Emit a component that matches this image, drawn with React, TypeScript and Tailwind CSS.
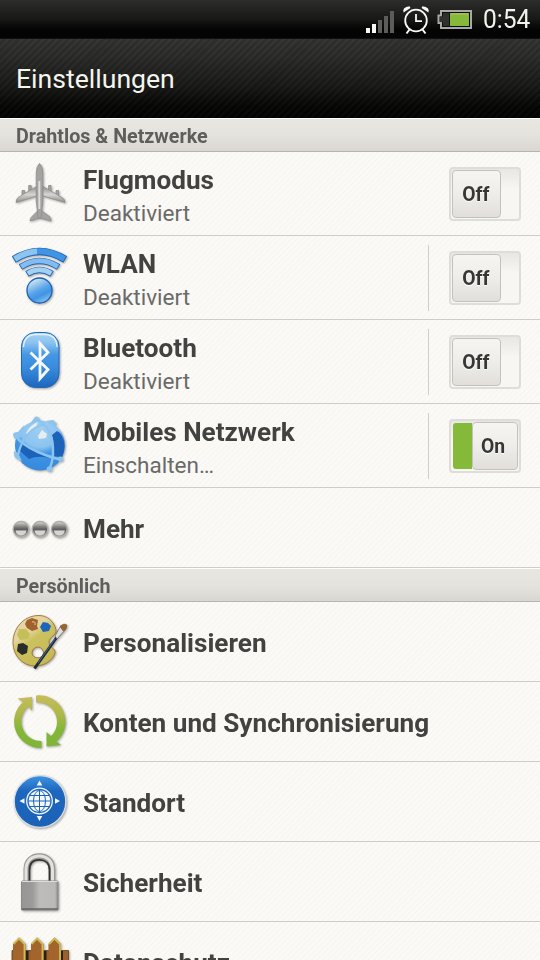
import type { ReactNode } from "react";
import clsx from "clsx";

// =========================================
// ICONS
// =========================================
const Icon = ({ children }: { children: ReactNode }) => (
    <svg
        viewBox="0 0 61 61"
        className="w-[61px] h-[61px] shrink-0 drop-shadow-[1px_1px_1px_rgba(0,0,0,0.35)]"
    >
        {children}
    </svg>
);

const PlaneIcon = () => (
    <Icon>
        <g fill="#a3a3a1" stroke="#8a8a88" strokeWidth="0.7">
            <path d="M12 27.500h2.500v6H12zM18.700 22.500h2.500v6h-2.500zM38.500 22.500H41v6h-2.500zM46 27.500h2.500v6H46z" />
            <path
                fill="url(#planeWing)"
                d="M26.500 23.500 8 34.500q-2 1.500-2 5l20.500-6.500zM33 23.500 52 34.500q3 1.500 3 5L33 33z"
            />
            <path d="M27.500 48 21.500 54q-1.500 1.500-1.500 4l9.500-3 11.500 3q0-3-1.500-4.500L32 48z" />
            <path d="M29.500 0.500q3.300 3 3.300 10V38l-1.800 17h-2.800L26.200 38V10.500q0-7 3.300-10z" />
        </g>
        <path d="M29.300 18v28" stroke="#dcdcda" strokeWidth="2" />
        <defs>
            <linearGradient id="planeWing" x1="0" y1="0" x2="0" y2="1">
                <stop offset="0" stopColor="#8f8f8d" />
                <stop offset="0.5" stopColor="#d4d4d2" />
                <stop offset="1" stopColor="#8c8c8a" />
            </linearGradient>
        </defs>
    </Icon>
);

const WlanIcon = () => (
    <Icon>
        <g fill="none" stroke="#1c62b8" strokeLinejoin="round">
            <path d="M3.800 12.500Q29.500-3.500 55.200 12.500" strokeWidth="7.500" />
            <path d="M10.500 20Q29.500 8 48.500 20" strokeWidth="6.500" />
            <path d="M17 27Q29.500 19 42 27" strokeWidth="6.500" />
        </g>
        <g fill="none">
            <path d="M4.600 12Q29.500-3.500 54.400 12" stroke="url(#wlanArc)" strokeWidth="5.800" />
            <path d="M11.200 19.600Q29.500 8 47.800 19.600" stroke="#83bdf0" strokeWidth="4.800" />
            <path d="M17.700 26.600Q29.500 19 41.300 26.600" stroke="#a4d0f2" strokeWidth="4.800" />
        </g>
        <circle cx="29.500" cy="43.500" r="12.500" fill="url(#wlanDot)" stroke="#1c62b8" strokeWidth="1.300" />
        <defs>
            <linearGradient id="wlanArc">
                <stop offset="0" stopColor="#8cc4f2" />
                <stop offset="0.45" stopColor="#8cc4f2" />
                <stop offset="0.46" stopColor="#3f94e4" />
                <stop offset="1" stopColor="#3f94e4" />
            </linearGradient>
            <linearGradient id="wlanDot" x1="0.2" y1="0" x2="0.7" y2="1">
                <stop offset="0" stopColor="#e8f0f4" />
                <stop offset="0.5" stopColor="#58a5e8" />
                <stop offset="0.7" stopColor="#3f94e4" />
                <stop offset="1" stopColor="#8cc4f2" />
            </linearGradient>
        </defs>
    </Icon>
);

const BluetoothIcon = () => (
    <Icon>
        <rect x="11.500" y="1.500" width="37.500" height="55" rx="14" fill="url(#btBody)" stroke="#2267b8" />
        <path d="M13.500 16Q14 3.500 26 3.500h8.500Q46.500 3.500 47 16" fill="none" stroke="#e2f1fb" strokeWidth="1.300" />
        <path d="M20.500 21.500 38 38.500 30 47.500V12.500L38 21.500 20.500 38.500" fill="none" stroke="#f6f8f8" strokeWidth="2.800" />
        <defs>
            <linearGradient id="btBody" x1="0" y1="0" x2="0" y2="1">
                <stop offset="0" stopColor="#a6d3f4" />
                <stop offset="0.18" stopColor="#8cc4f0" />
                <stop offset="0.4" stopColor="#4598e5" />
                <stop offset="0.65" stopColor="#388bdc" />
                <stop offset="1" stopColor="#1c66bd" />
            </linearGradient>
        </defs>
    </Icon>
);

const NetworkIcon = () => (
    <Icon>
        <circle cx="30" cy="30.500" r="25" fill="url(#netGlobe)" />
        <path d="M42 20Q45 28 42 41l10 1q5-11 0-21-2-4-5-5z" fill="#1b62b8" />
        <path d="M11 26Q24 35 40 43 27 40 19 44L10 36z" fill="#1b62b8" />
        <path d="M28 21 32 15l5 4-1 4-7 1zM16 18q5-9 12-11l-2 5-8 8z" fill="#eff1ee" opacity="0.9" />
        <g fill="none" stroke="#8dc4ef">
            <path d="M5 20.500Q12 30 28 37T51 44" strokeWidth="2.600" />
            <path d="M26 4Q39 10 42 25T40 53" strokeWidth="2.400" />
            <path d="M35 9Q14 14 8 40" strokeWidth="2.200" />
        </g>
        <g fill="#8dc4ef">
            <path d="M25 2q3-2 5 3l-11 5zM3 20q0-3 5-3l6-7-3 12-6 2zM4 36l4 2 4 8-5-2q-4-3-3-8z" />
            <circle cx="50.500" cy="44" r="2.600" />
            <circle cx="39.500" cy="54" r="2.800" />
            <path d="M36 6l7-1 4 4-3 2z" />
        </g>
        <defs>
            <radialGradient id="netGlobe" cx="0.5" cy="0.15" r="0.85">
                <stop offset="0" stopColor="#9fcff3" />
                <stop offset="0.45" stopColor="#8cc4f0" />
                <stop offset="0.62" stopColor="#3f94e4" />
                <stop offset="1" stopColor="#3689dc" />
            </radialGradient>
        </defs>
    </Icon>
);

const MoreIcon = () => (
    <Icon>
        {[11, 30, 49.300].map((cx) => (
            <g key={cx}>
                <circle cx={cx} cy="32.300" r="7.800" fill="url(#moreBall)" stroke="#b0afac" strokeWidth="1.300" />
                <path d={`M${cx - 5.500} 33.500h11q-1 5-5.500 5t-5.500-5z`} fill="#d6d5d3" />
            </g>
        ))}
        <defs>
            <linearGradient id="moreBall" x1="0" y1="0" x2="0" y2="1">
                <stop offset="0" stopColor="#dddcda" />
                <stop offset="0.3" stopColor="#8b8b89" />
                <stop offset="0.5" stopColor="#5e5e5c" />
                <stop offset="1" stopColor="#9c9b99" />
            </linearGradient>
        </defs>
    </Icon>
);

const PaletteIcon = () => (
    <Icon>
        <path
            d="M29 4.500C13 4.500 3 18 3 31.500S13 55 25 55c10 0 18-6 20-13 1-5-6-5-6-11 0-5 8-7 7-12C44 10 37 4.500 29 4.500zM28 36a6 6 0 0 1 5.500 6.500 6 6 0 0 1-11.500 0A6 6 0 0 1 28 36z"
            fill="url(#paletteWood)"
            stroke="#a07038"
            strokeWidth="0.900"
            fillRule="evenodd"
        />
        <path d="m17 9 5-2 6 2-1 6 1 3-6 2-5-3-2-4z" fill="#a0612c" />
        <path d="M22 11q4-1 3 3" fill="none" stroke="#e6d09c" />
        <path d="m33 11 5 1 3 3-2 5-6 1-3-5z" fill="#1d65bb" />
        <path d="m9 18 7 0 4 5-2 5-8 1-3-5z" fill="#c4bf58" />
        <path d="m8 33 5-1 5 3-1 7-5 2-5-4z" fill="#2c2c2a" />
        <path d="M24.500 57.500 47 26" stroke="#26282c" strokeWidth="3" />
        <path d="M28 52 45 28" stroke="#2971c2" strokeWidth="1" />
        <path d="m45 25 5-9 5 3-8 9z" fill="#dfdedb" stroke="#5a5a58" strokeWidth="0.700" />
        <path d="m50 15 4-2 3 1-1 4-3 2z" fill="#a0622c" stroke="#6a4a28" strokeWidth="0.500" />
        <defs>
            <linearGradient id="paletteWood" x1="0" y1="0" x2="0.600" y2="1">
                <stop offset="0" stopColor="#ead9ac" />
                <stop offset="0.400" stopColor="#e5d29c" />
                <stop offset="0.550" stopColor="#cbc25f" />
                <stop offset="1" stopColor="#c5b954" />
            </linearGradient>
        </defs>
    </Icon>
);

const SyncIcon = () => (
    <Icon>
        <g fill="url(#syncGreen)">
            <path d="M7.500 7.500 22 6v14l-3.500-4.500a19.500 19.500 0 0 0 13 34.500v7A26.300 26.300 0 0 1 13 11z" />
            <path d="M26 4.500A26.300 26.300 0 0 1 46.500 50.500l4.500 3.500L36.500 55.500v-14.500l4.500 4A19.500 19.500 0 0 0 26 11.500z" />
        </g>
        <defs>
            <linearGradient id="syncGreen" gradientUnits="userSpaceOnUse" x1="0" y1="4" x2="0" y2="57">
                <stop offset="0" stopColor="#c8bd5c" />
                <stop offset="0.350" stopColor="#aeb84c" />
                <stop offset="0.650" stopColor="#84b738" />
                <stop offset="1" stopColor="#7fb537" />
            </linearGradient>
        </defs>
    </Icon>
);

const LocationIcon = () => (
    <Icon>
        <circle cx="30" cy="30.500" r="25.800" fill="url(#locBlue)" stroke="#d9dde0" strokeWidth="1.300" />
        <circle cx="29.500" cy="30" r="12.800" fill="none" stroke="#eef4f8" strokeWidth="1.300" />
        <circle cx="29.500" cy="30" r="10.800" fill="#f4f8fa" />
        <g fill="none" stroke="#1c64ba" strokeWidth="1">
            <path d="M29.500 19v22M18.500 30h22M20 24.500h19M20 35.500h19" />
            <ellipse cx="29.500" cy="30" rx="6" ry="10.500" />
        </g>
        <path d="m29.500 9.500 2.800 5h-5.600zM29.500 50l2.800-5h-5.600zM9.500 30l5-2.800v5.600zM50 30l-5-2.800v5.600z" fill="#f4f8fa" />
        <defs>
            <linearGradient id="locBlue" x1="0" y1="0" x2="0" y2="1">
                <stop offset="0" stopColor="#3e93e3" />
                <stop offset="0.300" stopColor="#1d67be" />
                <stop offset="1" stopColor="#1b62b7" />
            </linearGradient>
        </defs>
    </Icon>
);

const LockIcon = () => (
    <Icon>
        <path d="M16.800 31V18.500C16.800 10 22 5.500 29.300 5.500S42 10 42 18.500V31" fill="none" stroke="#999896" strokeWidth="6.500" />
        <path d="M16 31V18.500C16 9.500 22 5 29.300 5S42.500 9.500 42.500 18.500V31" fill="none" stroke="#e3e2df" strokeWidth="3" />
        <path d="M19.500 31V19C19.500 12 23.500 8.800 29.300 8.800S39.500 12 39.500 19V31" fill="none" stroke="#343432" strokeWidth="1.700" />
        <rect x="11.500" y="30" width="36.500" height="29" rx="1" fill="url(#lockBody)" stroke="#8b8a88" />
        <path d="M12 30.500h35.500" stroke="#dddcd9" />
        <path d="M11.500 58h36.500" stroke="#666563" strokeWidth="1.500" />
        <defs>
            <linearGradient id="lockBody">
                <stop offset="0" stopColor="#979694" />
                <stop offset="0.300" stopColor="#9c9b99" />
                <stop offset="0.500" stopColor="#bdbcba" />
                <stop offset="0.920" stopColor="#bab9b7" />
                <stop offset="1" stopColor="#8b8a88" />
            </linearGradient>
        </defs>
    </Icon>
);

const FenceIcon = () => (
    <Icon>
        <path d="M2 19.500h56.500V61H2z" fill="#9c6029" stroke="#5f3f1e" strokeWidth="0.800" />
        <path d="M15.500 20h3v41h-3zM33.500 20h3v41h-3zM50.500 20h2.500v41h-2.500z" fill="#2c2012" />
        {[3, 21, 38.500].map((x) => (
            <g key={x} transform={`translate(${x} 0)`}>
                <path d="M0 61V13l6-6.500 6.500 6.500V61z" fill="#a4652c" />
                <path d="M0.500 13 6 7.500l5.500 5.500V61" fill="none" stroke="#cbbd58" strokeWidth="1.800" />
            </g>
        ))}
    </Icon>
);

// =========================================
// STATUS BAR
// =========================================
const StatusBar = () => (
    <div className="flex h-[38px] items-center justify-end bg-linear-to-b from-[#2d2d2b] via-[#181816] via-50% to-[#040404] to-80%">
        <svg viewBox="0 0 110 38" className="h-[38px] w-[110px]">
            <path d="M1 28h4v5H1zM7 24h4v9H7z" fill="#f8f8f6" />
            <path d="M13 20h4v13h-4zM19 16h4v17h-4zM25 11h4v22h-4z" fill="#5c5c5a" />
            <g fill="none" stroke="#f8f8f6">
                <circle cx="51" cy="20.500" r="10.800" strokeWidth="1.800" />
                <path d="M51 14v7.200h6" strokeWidth="1.800" />
                <path d="m44.500 29.500-3 4M57.500 29.500l3 4" strokeWidth="2" />
            </g>
            <path d="M38.500 12.500Q37 7 44.500 6.200l1 1.800zM63.500 12.500Q65 7 57.500 6.200l-1 1.800z" fill="#f8f8f6" />
            <path d="M76 11h30v17H76v-5h-2.500v-7.500H76z" fill="#0b0b0a" stroke="#a8a8a6" strokeWidth="2" />
            <path d="M75 16.500h3V13h6v13h-6v-4h-3z" fill="#30302e" />
            <path d="M85 13h19v13H85z" fill="#86b93a" />
            <path d="M86 14h17" stroke="#b9c25a" />
        </svg>
        <span className="mr-[9px] ml-[8px] mt-[2px] origin-left scale-x-[0.98] text-[25px] leading-[38px] text-[#f2f2ee]">0:54</span>
    </div>
);

// =========================================
// LIST PARTS
// =========================================
const Toggle = ({ on = false }: { on?: boolean }) => (
    <div
        className={clsx(
            "flex h-[54px] w-[72px] shrink-0 overflow-hidden rounded-[4px] border-2 border-[#dfddd9] bg-linear-to-b from-[#e9e7e3] to-[#f7f6f3] to-40% p-px",
            on && "justify-end"
        )}
    >
        {on && <div className="ml-px h-[46px] w-[20px] self-center rounded-l-[3px] bg-[#84b93a]" />}
        <div
            className={clsx(
                "flex h-[48px] items-center justify-center rounded-[4px] border border-[#c3c1be] bg-linear-to-b from-[#f6f5f2] via-[#eeede9] to-[#e2dfdb] pt-[3px] text-[21px] font-bold text-[#363634] [text-shadow:0_1px_0_#fff]",
                on ? "w-[48px] pr-[3px]" : "w-[49px] pr-px"
            )}
        >
            <span className="scale-x-[0.92]">{on ? "On" : "Off"}</span>
        </div>
    </div>
);

const SectionHeader = ({ title }: { title: string }) => (
    <div className="flex h-[34px] items-center border-t border-b border-t-white border-b-[#b8b4b0] bg-linear-to-b from-[#e8e6e0] via-[#e5e3dd] to-[#dad7d3] pt-[2px] pl-4 text-[20px] font-bold text-[#5e5e5c]">
        <span className="origin-left scale-x-[0.985]">{title}</span>
    </div>
);

type RowProps = {
    icon: ReactNode;
    title: string;
    status?: string;
    toggle?: "on" | "off";
    divider?: boolean;
};

const Row = ({ icon, title, status, toggle, divider }: RowProps) => (
    <div
        className={clsx(
            "flex shrink-0 items-center border-b border-[#cfcdc8] pl-[10px] pr-[19px]",
            status ? "h-[84px]" : "h-[80px]"
        )}
    >
        {icon}
        <div className={clsx("ml-[12px] flex-1 whitespace-nowrap", status ? "pt-[6px]" : "pt-[4px]")}>
            <div className="origin-left scale-x-[1.005] text-[26px] leading-[33px] font-bold text-[#424240]">{title}</div>
            {status && <div className="text-[22.500px] leading-[33px] text-[#6a6a68]">{status}</div>}
        </div>
        {divider && <div className="mr-[20px] h-[66px] w-px bg-[#d0cecb]" />}
        {toggle && <Toggle on={toggle === "on"} />}
    </div>
);

// =========================================
// SETTINGS SCREEN
// =========================================
export default function App() {
    return (
        <div className="h-[960px] w-[540px] overflow-hidden bg-[#faf9f5] bg-[repeating-linear-gradient(135deg,#fbfaf7_0_2px,#f8f7f3_2px_4px)] font-['Roboto',sans-serif]">
            <StatusBar />
            <div className="flex h-[80px] items-center border-t border-t-[#11110f] bg-[repeating-linear-gradient(135deg,rgba(255,255,255,0.025)_0_2px,rgba(0,0,0,0.06)_2px_5px),linear-gradient(180deg,#323230_0%,#292927_25%,#181816_60%,#060605_85%,#020202_100%)] pt-px pl-4 text-[26.600px] text-[#f5f5ef]">
                <span>Einstellungen</span>
            </div>

            <SectionHeader title="Drahtlos & Netzwerke" />
            <Row icon={<PlaneIcon />} title="Flugmodus" status="Deaktiviert" toggle="off" />
            <Row icon={<WlanIcon />} title="WLAN" status="Deaktiviert" toggle="off" divider />
            <Row icon={<BluetoothIcon />} title="Bluetooth" status="Deaktiviert" toggle="off" divider />
            <Row icon={<NetworkIcon />} title="Mobiles Netzwerk" status="Einschalten…" toggle="on" divider />
            <Row icon={<MoreIcon />} title="Mehr" />

            <SectionHeader title="Persönlich" />
            <Row icon={<PaletteIcon />} title="Personalisieren" />
            <Row icon={<SyncIcon />} title="Konten und Synchronisierung" />
            <Row icon={<LocationIcon />} title="Standort" />
            <Row icon={<LockIcon />} title="Sicherheit" />
            <Row icon={<FenceIcon />} title="Datenschutz" />
        </div>
    );
}
